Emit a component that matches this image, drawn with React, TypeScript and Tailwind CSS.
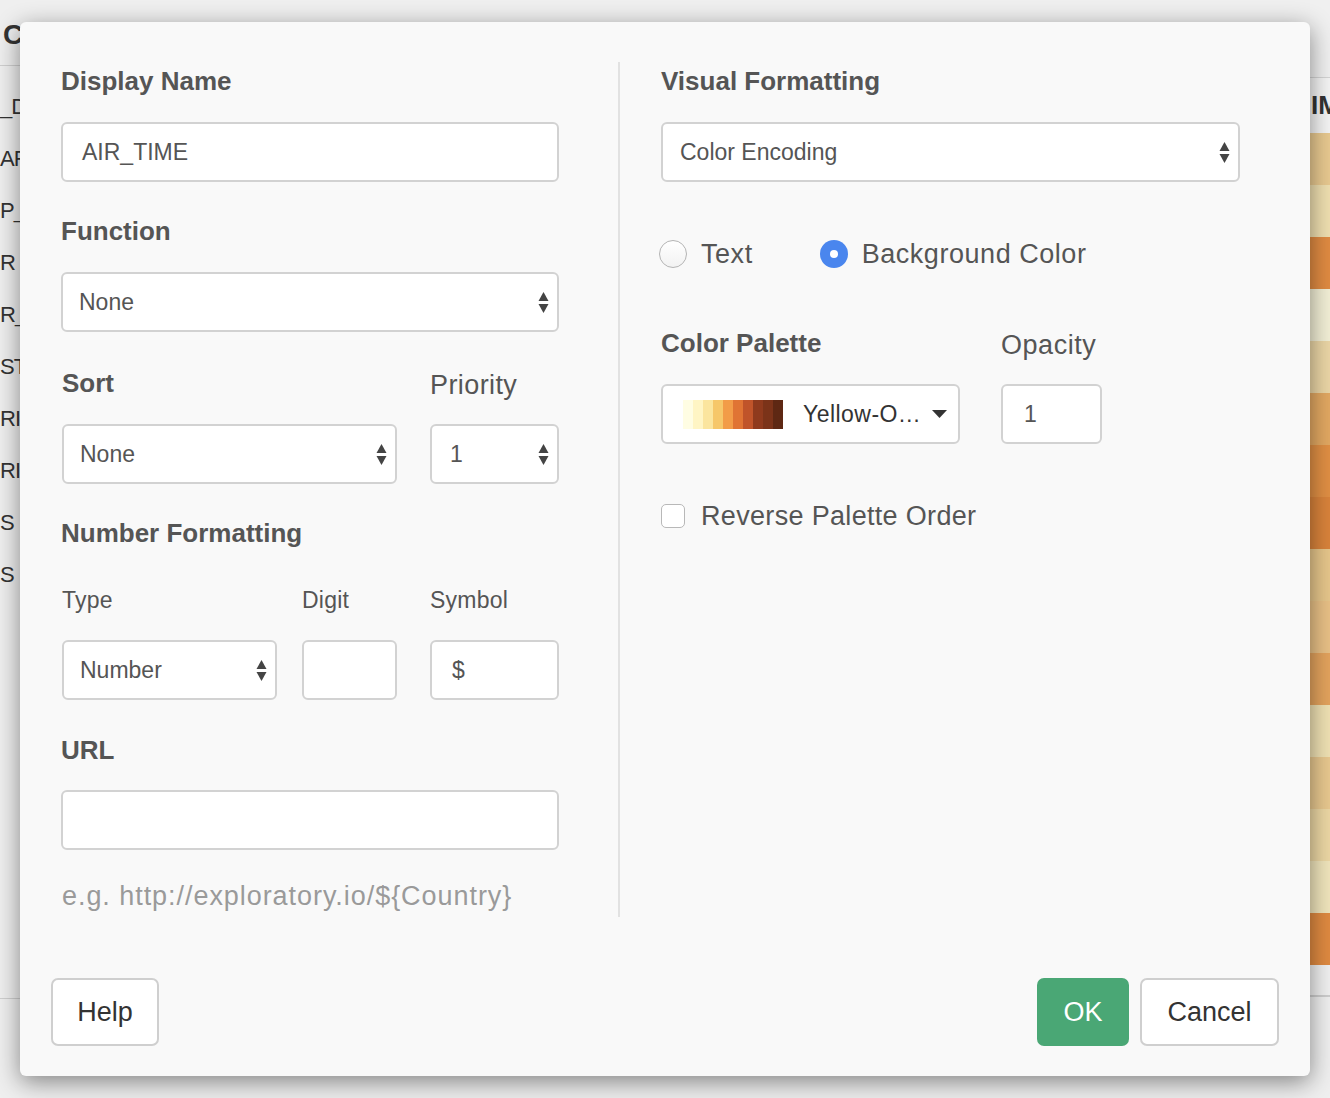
import React from "react";

const FONT = { fontFamily: '"Liberation Sans", Arial, Helvetica, sans-serif' };

const LEFT_ROWS = ["_D", "AR", "P_", "R", "R_", "ST", "RI", "RI", "S", "S"];

const RIGHT_CELLS = [
  "#e8c990", "#efdfb0", "#e08b42", "#f2efd6", "#ebd6a6", "#e2a862", "#e08f44", "#d9833b",
  "#e6c68b", "#e8c086", "#e3a35d", "#efe1b3", "#e8c88f", "#ecd7a4", "#f0e5bc", "#df8a41",
];

const PALETTE = [
  "#fffde3", "#fff5c4", "#fbe59e", "#f6c76a", "#f29c48",
  "#e07434", "#c0542a", "#8f3a1d", "#7b3319", "#5e2813",
];

function UpDown() {
  return (
    <svg width="11" height="23" viewBox="0 0 11 23" className="shrink-0">
      <path d="M0.5 10 L5.5 1 L10.5 10 Z" fill="#444" />
      <path d="M0.5 13 L10.5 13 L5.5 22 Z" fill="#444" />
    </svg>
  );
}

function Heading({ children, className = "" }: { children: React.ReactNode; className?: string }) {
  return (
    <div className={`text-[26px] leading-[30px] font-semibold text-[#555] ${className}`}>{children}</div>
  );
}

function Select({ value, className = "" }: { value: string; className?: string }) {
  return (
    <div
      className={`flex h-[60px] items-center justify-between rounded-[6px] border-2 border-[#d2d2d2] bg-white pl-[16px] pr-[8px] text-[23px] text-[#555] ${className}`}
    >
      <span>{value}</span>
      <UpDown />
    </div>
  );
}

function Input({ value = "", className = "" }: { value?: string; className?: string }) {
  return (
    <div
      className={`flex h-[60px] items-center rounded-[6px] border-2 border-[#d2d2d2] bg-white pl-[19px] text-[23px] text-[#555] ${className}`}
    >
      {value}
    </div>
  );
}

function Background() {
  return (
    <div className="flex h-full w-full">
      {/* left strip of the page behind */}
      <div className="flex w-[20px] flex-col">
        <div className="h-[66px] border-b border-[#cfcfcf] pt-[20px] pl-[3px] text-[28px] font-bold leading-[30px] whitespace-nowrap text-[#333]">
          C
        </div>
        <div className="pt-[14px]">
          {LEFT_ROWS.map((r, i) => (
            <div key={i} className="flex h-[52px] items-center whitespace-nowrap text-[22px] tracking-[-0.04em] text-[#333]">
              {r}
            </div>
          ))}
        </div>
        <div className="mt-auto h-[100px] border-t border-[#cfcfcf]" />
      </div>
      <div className="flex-1" />
      {/* right strip: colored table column */}
      <div className="flex w-[20px] flex-col">
        <div className="h-[78px] border-b border-[#d4d4d4] bg-[#f0f0f0]" />
        <div className="flex h-[55px] items-center whitespace-nowrap bg-[#f4f4f4] pl-[1px] text-[26px] font-bold text-[#333]">
          IM
        </div>
        <div className="flex h-[832px] flex-col">
          {RIGHT_CELLS.map((c, i) => (
            <div key={i} className="h-[52px] shrink-0" style={{ backgroundColor: c }} />
          ))}
        </div>
        <div className="h-[32px] border-b-2 border-[#cdcdcd] bg-[#f0f0f0]" />
      </div>
    </div>
  );
}

export default function App() {
  return (
    <div className="relative h-[1098px] w-[1330px] overflow-hidden bg-[#efefef]" style={FONT}>
      <Background />

      {/* modal */}
      <div className="absolute left-[20px] top-[22px] flex h-[1054px] w-[1290px] flex-col rounded-[6px] bg-[#f9f9f9] shadow-[0_6px_24px_rgba(0,0,0,0.45)]">
        <div className="flex flex-1 items-start pl-[41px] pt-[44px]">
          {/* left column */}
          <div className="flex w-[498px] flex-col">
            <Heading>Display Name</Heading>
            <Input value="AIR_TIME" className="mt-[26px]" />

            <Heading className="mt-[34px]">Function</Heading>
            <Select value="None" className="mt-[26px]" />

            <div className="mt-[36px] flex gap-[33px] pl-[1px]">
              <div className="flex w-[335px] flex-col">
                <Heading>Sort</Heading>
                <Select value="None" className="mt-[26px]" />
              </div>
              <div className="flex w-[129px] flex-col">
                <div className="mt-[2px] text-[27px] leading-[30px] tracking-[0.015em] text-[#555]">Priority</div>
                <Select value="1" className="mt-[24px] pl-[18px]" />
              </div>
            </div>

            <Heading className="mt-[34px]">Number Formatting</Heading>
            <div className="mt-[38px] flex pl-[1px] text-[23px] leading-[28px] tracking-[0.01em] text-[#555]">
              <span className="w-[240px]">Type</span>
              <span className="w-[128px]">Digit</span>
              <span>Symbol</span>
            </div>
            <div className="mt-[26px] flex pl-[1px]">
              <Select value="Number" className="w-[215px]" />
              <Input className="ml-[25px] w-[95px]" />
              <Input value="$" className="ml-[33px] w-[129px] pl-[20px]" />
            </div>

            <Heading className="mt-[35px]">URL</Heading>
            <Input className="mt-[25px]" />

            <div className="mt-[31px] pl-[1px] text-[27px] leading-[30px] tracking-[0.035em] text-[#9a9a9a]">
              e.g. http://exploratory.io/${"{"}Country{"}"}
            </div>
          </div>

          {/* divider */}
          <div className="ml-[59px] mt-[-4px] h-[855px] w-[2px] bg-[#e2e2e2]" />

          {/* right column */}
          <div className="ml-[41px] flex w-[579px] flex-col">
            <Heading>Visual Formatting</Heading>
            <Select value="Color Encoding" className="mt-[26px] pl-[17px]" />

            <div className="mt-[57px] flex h-[30px] items-center text-[27px] tracking-[0.02em] text-[#555]">
              <span className="ml-[-2px] h-[28px] w-[28px] rounded-full border border-[#b4b4b4] bg-gradient-to-b from-white to-[#f2f2f2]" />
              <span className="ml-[14px]">Text</span>
              <span className="ml-[67px] flex h-[28px] w-[28px] items-center justify-center rounded-full bg-[#4a86ee]">
                <span className="h-[8px] w-[8px] rounded-full bg-white" />
              </span>
              <span className="ml-[14px]">Background Color</span>
            </div>

            <div className="mt-[59px] flex gap-[41px]">
              <div className="flex w-[299px] flex-col">
                <Heading>Color Palette</Heading>
                <div className="mt-[26px] flex h-[60px] items-center rounded-[6px] border-2 border-[#d2d2d2] bg-white pl-[20px] pr-[10px] text-[23px] text-[#333]">
                  <div className="flex h-[29px]">
                    {PALETTE.map((c) => (
                      <span key={c} className="h-full w-[10px]" style={{ backgroundColor: c }} />
                    ))}
                  </div>
                  <span className="ml-[20px] tracking-[0.02em]">Yellow-O…</span>
                  <svg width="15" height="8" viewBox="0 0 15 8" className="ml-auto mr-[1px]">
                    <path d="M0 0 L15 0 L7.5 8 Z" fill="#333" />
                  </svg>
                </div>
              </div>
              <div className="flex w-[101px] flex-col">
                <div className="mt-[2px] text-[27px] leading-[30px] tracking-[0.02em] text-[#555]">Opacity</div>
                <Input value="1" className="mt-[24px] pl-[21px]" />
              </div>
            </div>

            <div className="mt-[57px] flex h-[30px] items-center text-[27px] tracking-[0.012em] text-[#555]">
              <span className="h-[24px] w-[24px] rounded-[5px] border border-[#b8b8b8] bg-white" />
              <span className="ml-[16px]">Reverse Palette Order</span>
            </div>
          </div>
        </div>

        {/* footer */}
        <div className="flex items-end justify-between px-[31px] pb-[30px]">
          <button className="h-[68px] w-[108px] rounded-[7px] border-2 border-[#cfcfcf] bg-white text-[27px] text-[#333]">
            Help
          </button>
          <div className="flex gap-[11px]">
            <button className="h-[68px] w-[92px] rounded-[7px] bg-[#4aa775] text-[27px] text-white">OK</button>
            <button className="h-[68px] w-[139px] rounded-[7px] border-2 border-[#cfcfcf] bg-white text-[27px] text-[#333]">
              Cancel
            </button>
          </div>
        </div>
      </div>
    </div>
  );
}
